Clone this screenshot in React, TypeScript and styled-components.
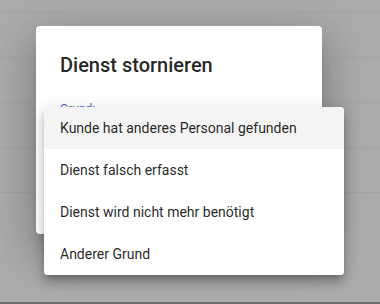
import React from "react";
import styled, { createGlobalStyle } from "styled-components";

const Global = createGlobalStyle`
  html, body { margin: 0; padding: 0; }
  body { font-family: Roboto, "Noto Sans", Arial, sans-serif; background: #ababab; }
  * { box-sizing: border-box; }
`;

const Screen = styled.div`
  position: relative;
  width: 380px;
  height: 304px;
  overflow: hidden;
  background: #ababab;
  display: flex;
  flex-direction: column;
`;

const TopGap = styled.div`
  height: 13px;
  flex: none;
  border-bottom: 1px solid #a4a4a4;
`;

const Row = styled.div`
  height: 45px;
  flex: none;
  border-bottom: 1px solid #a4a4a4;
`;

const Spacer = styled.div`
  flex: 1;
`;

const BottomBar = styled.div`
  height: 2px;
  flex: none;
  background: #6c6c6c;
`;

const Dialog = styled.div`
  position: absolute;
  left: 36px;
  top: 26px;
  width: 286px;
  height: 208px;
  background: #fff;
  border-radius: 4px;
  padding: 25px 24px 24px;
  display: flex;
  flex-direction: column;
  box-shadow: 0 11px 15px -7px rgba(0,0,0,.2), 0 24px 38px 3px rgba(0,0,0,.14), 0 9px 46px 8px rgba(0,0,0,.12);
`;

const Title = styled.h2`
  margin: 0;
  font-family: Roboto, sans-serif;
  font-weight: 500;
  font-size: 20px;
  line-height: 28px;
  color: rgba(0,0,0,.87);
`;

const Label = styled.div`
  margin-top: 22px;
  font-family: Roboto, sans-serif;
  font-size: 12px;
  line-height: 16px;
  color: #5c6bc0;
`;

const Menu = styled.div`
  position: absolute;
  left: 44px;
  top: 107px;
  width: 300px;
  background: #fff;
  border-radius: 4px;
  overflow: hidden;
  display: flex;
  flex-direction: column;
  box-shadow: 0 5px 5px -3px rgba(0,0,0,.2), 0 8px 10px 1px rgba(0,0,0,.14), 0 3px 14px 2px rgba(0,0,0,.12);
`;

const Item = styled.div<{ $active?: boolean }>`
  height: 42px;
  padding: 0 16px;
  display: flex;
  align-items: center;
  font-family: Roboto, sans-serif;
  font-size: 14px;
  color: rgba(0,0,0,.87);
  background: ${(p) => (p.$active ? "#f4f4f4" : "#fff")};
  white-space: nowrap;
`;

const options = [
  "Kunde hat anderes Personal gefunden",
  "Dienst falsch erfasst",
  "Dienst wird nicht mehr benötigt",
  "Anderer Grund",
];

export default function App() {
  return (
    <>
      <Global />
      <Screen>
        <TopGap />
        <Row />
        <Row />
        <Row />
        <Row />
        <Spacer />
        <BottomBar />
        <Dialog>
          <Title>Dienst stornieren</Title>
          <Label>Grund:</Label>
        </Dialog>
        <Menu>
          {options.map((o, i) => (
            <Item key={o} $active={i === 0}>
              {o}
            </Item>
          ))}
        </Menu>
      </Screen>
    </>
  );
}
